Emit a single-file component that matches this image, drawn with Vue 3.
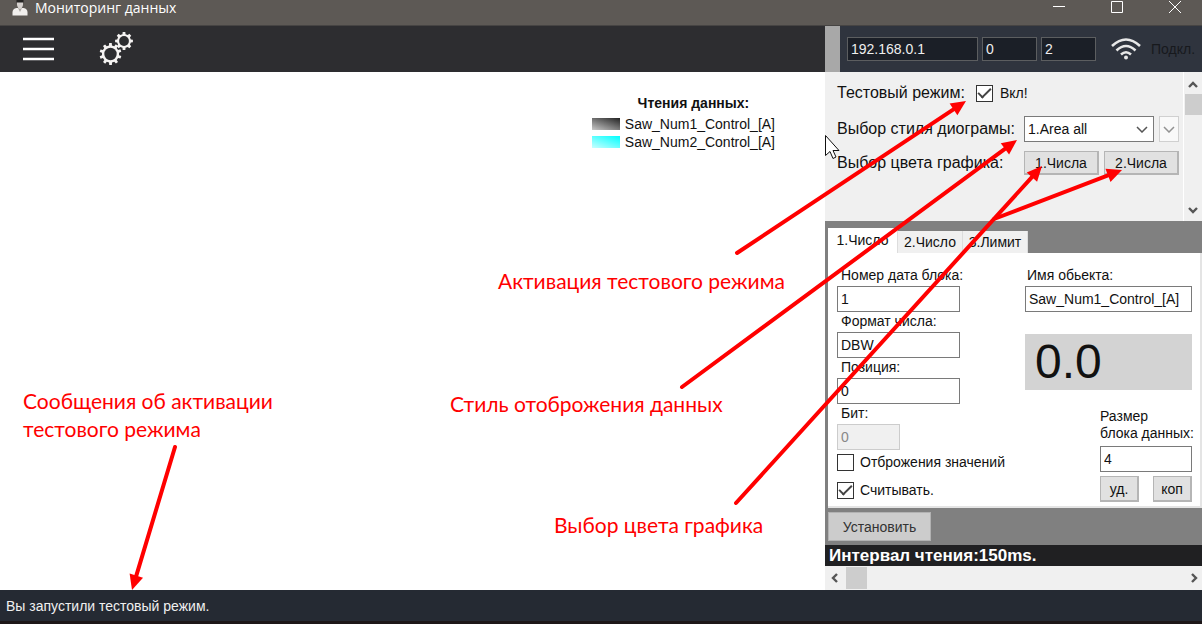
<script setup>
import { ref } from 'vue'

const ip = ref('192.168.0.1')
const rack = ref('0')
const slot = ref('2')
const testMode = ref(true)
const styleName = ref('1.Area all')
const block = ref('1')
const format = ref('DBW')
const position = ref('0')
const bit = ref('0')
const objectName = ref('Saw_Num1_Control_[A]')
const size = ref('4')
const showValues = ref(false)
const readValues = ref(true)
const tabs = ['1.Число', '2.Число', '3.Лимит']
const active = ref(0)

// each arrow runs from its tail to the tip of its head
const arrows = [
  [737, 253, 966, 101],
  [682, 387, 1017, 140],
  [736, 503, 1042, 166],
  [994, 219, 1122, 170],
  [175, 447, 132, 590],
].map(([x1, y1, x2, y2]) => {
  const d = Math.hypot(x2 - x1, y2 - y1)
  const ux = (x2 - x1) / d
  const uy = (y2 - y1) / d
  const bx = x2 - ux * 15
  const by = y2 - uy * 15
  return {
    x1, y1, x2: bx, y2: by,
    head: `${x2},${y2} ${bx - uy * 7},${by + ux * 7} ${bx + uy * 7},${by - ux * 7}`,
  }
})

const gear = (cx, cy, outer, inner, teeth, turn) => {
  const pts = []
  for (let i = 0; i < teeth; i++) {
    for (const [o, r] of [[-0.28, inner], [-0.19, outer], [0.19, outer], [0.28, inner]]) {
      const t = ((i + o) / teeth) * Math.PI * 2 + turn
      pts.push(`${cx + Math.cos(t) * r},${cy + Math.sin(t) * r}`)
    }
  }
  return pts.join(' ')
}
const bigGear = gear(11.5, 22, 11, 8.6, 10, 0.31)
const smallGear = gear(25, 9, 9, 7, 8, 0)
</script>

<template>
  <div class="window">
    <header class="titlebar">
      <svg class="app-icon" viewBox="0 0 18 18" width="18" height="18" aria-hidden="true">
        <path d="M1.500 15.500v-3q0-4 4-4.500h7q4 .5 4 4.500v3z" fill="#f1efed" />
        <path d="M7 8l2 4 2-4z" fill="#a8a4a0" />
        <path d="M6 1q3-2 6 0v4q-1 4-3 4T6 5z" fill="#d6d2cf" />
        <path d="M5.500 0h7v2.500h-7z" fill="#242322" />
      </svg>
      <h1>Мониторинг данных</h1>
      <div class="window-buttons">
        <button aria-label="Свернуть"><svg viewBox="0 0 12 12" width="12" height="12"><path d="M0 5.500h12" /></svg></button>
        <button aria-label="Развернуть"><svg viewBox="0 0 12 12" width="12" height="12"><path d="M.5.5h11v11H.5z" /></svg></button>
        <button aria-label="Закрыть"><svg viewBox="0 0 12 12" width="12" height="12"><path d="M0 0l12 12M12 0L0 12" /></svg></button>
      </div>
    </header>

    <div class="toolbar">
      <div class="tools">
        <button aria-label="Меню">
          <svg viewBox="0 0 31 24" width="31" height="24"><path d="M0 2h31M0 12h31M0 22h31" stroke="#fff" stroke-width="2.400" /></svg>
        </button>
        <button aria-label="Настройки">
          <svg viewBox="0 0 34 34" width="34" height="34">
            <polygon :points="bigGear" fill="#f5f3f2" />
            <polygon :points="smallGear" fill="#f5f3f2" />
            <circle cx="11.500" cy="22" r="6.200" fill="#2d2d30" />
            <circle cx="25" cy="9" r="4.900" fill="#2d2d30" />
          </svg>
        </button>
      </div>
      <div class="connection">
        <input v-model="ip" class="ip" aria-label="IP адрес" />
        <input v-model="rack" aria-label="Стойка" />
        <input v-model="slot" aria-label="Слот" />
        <svg class="wifi" viewBox="0 0 30 22" width="30" height="22" fill="none" stroke="#e8e8e8" stroke-width="2.600" aria-hidden="true">
          <path d="M1 8Q15-5 29 8M5.500 12.500Q15 3.500 24.500 12.500M10 16.500Q15 12 20 16.500" />
          <circle cx="15" cy="19.500" r="2" fill="#e8e8e8" stroke="none" />
        </svg>
        <button class="connect">Подкл.</button>
      </div>
    </div>

    <main>
      <section class="chart">
        <div class="legend">
          <h2>Чтения данных:</h2>
          <ul>
            <li><i class="swatch dark"></i>Saw_Num1_Control_[A]</li>
            <li><i class="swatch cyan"></i>Saw_Num2_Control_[A]</li>
          </ul>
        </div>
      </section>

      <aside>
        <section class="settings">
          <div class="settings-body">
            <div class="setting">
              <label for="test">Тестовый режим:</label>
              <input id="test" v-model="testMode" type="checkbox" />
              <label for="test" class="on">Вкл!</label>
            </div>
            <div class="setting grid">
              <label for="style">Выбор стиля диограмы:</label>
              <div class="row">
                <select id="style" v-model="styleName"><option>1.Area all</option></select>
                <select class="mini" disabled aria-label="Вариант"><option></option></select>
              </div>
            </div>
            <div class="setting grid">
              <span>Выбор цвета графика:</span>
              <div class="row">
                <button class="btn">1.Числа</button>
                <button class="btn">2.Числа</button>
              </div>
            </div>
          </div>
          <div class="vscroll" aria-hidden="true">
            <svg viewBox="0 0 10 7" width="10" height="7"><path d="M1 6l4-4 4 4" /></svg>
            <i></i>
            <svg class="end" viewBox="0 0 10 7" width="10" height="7"><path d="M1 1l4 4 4-4" /></svg>
          </div>
        </section>

        <section class="numbers">
          <div class="tabs" role="tablist">
            <button v-for="(t, i) in tabs" :key="t" role="tab" :aria-selected="active === i" :class="{ active: active === i }" @click="active = i">{{ t }}</button>
          </div>
          <div class="page">
            <div class="left">
              <label for="block">Номер дата блока:</label>
              <input id="block" v-model="block" />
              <label for="format">Формат числа:</label>
              <input id="format" v-model="format" />
              <label for="position">Позиция:</label>
              <input id="position" v-model="position" />
              <label for="bit">Бит:</label>
              <input id="bit" v-model="bit" class="short" disabled />
              <div class="check"><input id="show" v-model="showValues" type="checkbox" /><label for="show">Отброжения значений</label></div>
              <div class="check"><input id="read" v-model="readValues" type="checkbox" /><label for="read">Считывать.</label></div>
            </div>
            <div class="right">
              <label for="name">Имя обьекта:</label>
              <input id="name" v-model="objectName" />
              <output>0.0</output>
              <div class="size">
                <label for="size">Размер<br />блока данных:</label>
                <input id="size" v-model="size" />
                <div class="row">
                  <button class="btn">уд.</button>
                  <button class="btn">коп</button>
                </div>
              </div>
            </div>
          </div>
          <button class="apply">Установить</button>
        </section>

        <p class="interval">Интервал чтения:150ms.</p>
        <div class="hscroll" aria-hidden="true">
          <svg viewBox="0 0 7 10" width="7" height="10"><path d="M6 1L2 5l4 4" /></svg>
          <i></i>
          <svg class="end" viewBox="0 0 7 10" width="7" height="10"><path d="M1 1l4 4-4 4" /></svg>
        </div>
      </aside>
    </main>

    <footer>Вы запустили тестовый режим.</footer>

    <svg class="arrows" viewBox="0 0 1202 624" width="1202" height="624" aria-hidden="true">
      <path class="cursor" d="M825.500 135.500v20l4.500-4 3 7 3-1.500-3-6.500h6z" />
      <g v-for="(a, i) in arrows" :key="i">
        <line :x1="a.x1" :y1="a.y1" :x2="a.x2" :y2="a.y2" />
        <polygon :points="a.head" />
      </g>
    </svg>
    <p class="note note-test">Активация тестового режима</p>
    <p class="note note-style">Стиль отоброжения данных</p>
    <p class="note note-color">Выбор цвета графика</p>
    <p class="note note-status">Сообщения об активации<br />тестового режима</p>
  </div>
</template>

<style>
body { background: #fff; }
</style>

<style scoped>
* { box-sizing: border-box; margin: 0; }
.window {
  position: relative;
  display: flex;
  flex-direction: column;
  min-height: 100vh;
  overflow: hidden;
  font: 14px/16px "Liberation Sans", Arial, sans-serif;
  color: #111;
}
button, input, select { font: inherit; color: inherit; border-radius: 0; }
button { padding: 0; border: 0; background: none; }
input, select { border: 1px solid #7a7a7a; background: #fff; padding: 0 3px; min-width: 0; }

.titlebar { display: flex; height: 26px; background: #5d5955; color: #fff; padding-left: 11px; border-bottom: 1px solid #464443; }
.titlebar h1 { font: 14px/16px "Open Sans", sans-serif; margin-left: 6px; }
.window-buttons { display: flex; align-items: flex-start; gap: 46px; margin: 1px 21px 0 auto; }
.window-buttons button { display: flex; width: 12px; height: 12px; }
.window-buttons svg { stroke: #fff; fill: none; }

.toolbar { display: flex; height: 46px; }
.tools { flex: 1; display: flex; align-items: center; gap: 45px; padding-left: 23px; background: #2d2d30; }
.tools button, .tools svg { display: block; }
.connection { display: flex; align-items: center; width: 377px; padding-left: 7px; border-left: 15px solid #a8a8a8; background: #2f343e; }
.connection input { width: 55px; height: 24px; margin-right: 4px; background: #1b1f27; border: 1px solid #5c5e60; color: #eee; }
.connection .ip { width: 131px; }
.wifi { margin-left: 11px; }
.connect { margin-left: 10px; color: #17191d; }

main { flex: 1; display: flex; }
.chart { flex: 1; display: flex; justify-content: flex-end; align-items: flex-start; padding: 23px 50px 0 0; background: #fff; }
.legend h2 { font-size: 14px; line-height: 16px; text-align: center; margin-left: 20px; }
.legend ul { list-style: none; padding: 0; margin-top: 4px; }
.legend li { display: flex; align-items: center; gap: 5px; line-height: 18px; }
.swatch { width: 28px; height: 12px; }
.dark { background: linear-gradient(20deg, #c8c8c8, #222); }
.cyan { background: linear-gradient(20deg, #c8ffff, #00ffff); }

aside { width: 377px; display: flex; flex-direction: column; background: #808080; }
.settings { display: flex; height: 149px; background: #f0f0f0; }
.settings-body { flex: 1; padding: 9px 0 0 12px; font-size: 16px; }
.setting { display: flex; align-items: center; height: 24px; margin-bottom: 11px; }
.setting.grid { display: grid; grid-template-columns: 187px 1fr; }
.setting .on { font-size: 14px; margin-left: 7px; }
.row { display: flex; gap: 5px; font-size: 14px; }
input[type="checkbox"] { appearance: none; width: 17px; height: 17px; padding: 0; border: 1px solid #333; display: grid; place-items: center; }
input[type="checkbox"]:checked::after { content: ""; width: 11px; height: 5px; border: solid #444; border-width: 0 0 2px 2px; transform: translateY(-2px) rotate(-45deg); }
.setting input { margin-left: 11px; }
select { width: 130px; height: 26px; appearance: none; background: #fff url("data:image/svg+xml,%3Csvg xmlns='http://www.w3.org/2000/svg' width='12' height='7' fill='none' stroke='%23555' stroke-width='1.500'%3E%3Cpath d='M1 1l5 5 5-5'/%3E%3C/svg%3E") no-repeat right 5px center; }
.mini { width: 20px; border-color: #bbb; background-position: center; opacity: .6; }
.btn { height: 24px; flex: 0 0 75px; background: #e1e1e1; border: 2px solid #b5b5b5; border-width: 1px 2px 2px 1px; }
.vscroll { width: 19px; display: flex; flex-direction: column; align-items: center; padding: 9px 0 7px; border-left: 1px solid #fff; }
.vscroll svg, .hscroll svg { fill: none; stroke: #555; stroke-width: 2.400; }
.vscroll i { width: 17px; height: 21px; margin-top: 6px; background: #cdcdcd; }
.end { margin-top: auto; }

.numbers { flex: 1; padding: 7px 0 0 3px; }
.tabs { display: flex; align-items: flex-end; height: 25px; }
.tabs button { width: 65px; height: 22px; background: #f0f0f0; border-right: 1px solid #ddd; }
.tabs .active { width: 70px; height: 25px; padding-bottom: 2px; background: #fff; }
.page { display: flex; justify-content: space-between; height: 255px; padding: 13px 8px 0 9px; background: #fff; border: 1px solid #e4e4e4; border-width: 0 2px 2px 0; }
.left, .right { display: flex; flex-direction: column; }
.left { width: 170px; }
.left > label, .right > label { padding: 1px 0 3px 4px; height: 20px; line-height: 16px; }
.left > input, .right input { height: 26px; flex: none; }
.left > input { width: 123px; }
.left .short { width: 63px; margin-bottom: -2px; }
.left input:disabled { background: #f0f0f0; border-color: #ccc; color: #888; }
.check { display: flex; align-items: center; gap: 6px; height: 28px; }
.right { width: 167px; }
.right > label { padding-left: 2px; }
output { display: block; height: 56px; margin-top: 22px; padding-left: 10px; background: #d3d3d3; font: 48px/56px "Liberation Sans", sans-serif; }
.size { width: 92px; margin: 18px 0 0 auto; white-space: nowrap; }
.size label { display: block; margin-bottom: 4px; line-height: 17px; }
.size input { width: 92px; }
.size .row { justify-content: space-between; margin-top: 4px; }
.size .btn { flex-basis: 39px; height: 26px; }
.apply { width: 103px; height: 29px; margin: 4px 0 0; background: #ccc; border: 1px solid #b2b2b2; color: #333; }
.interval { height: 21px; padding-left: 4px; background: #202022; color: #fff; font-weight: bold; font-size: 17px; line-height: 21px; }
.hscroll { display: flex; align-items: center; height: 24px; padding: 0 4px 0 6px; background: #f0f0f0; }
.hscroll i { width: 21px; height: 22px; margin-left: 8px; background: #cdcdcd; }
.hscroll .end { margin: 0 0 0 auto; }

footer { height: 34px; padding: 0 6px; background: #252a33; border-bottom: 3px solid #1d1718; color: #f0f0f0; line-height: 32px; }

.arrows { position: absolute; top: 0; left: 0; pointer-events: none; }
.arrows line { stroke: #f00; stroke-width: 4; stroke-linecap: round; }
.arrows polygon { fill: #f00; }
.cursor { fill: #fff; stroke: #111; stroke-width: 1; }
.note { position: absolute; font: 21px/28px Lato, sans-serif; color: #f00; white-space: nowrap; }
.note-test { left: 498px; top: 267px; }
.note-style { left: 450px; top: 390px; }
.note-color { left: 554px; top: 511px; }
.note-status { left: 23px; top: 387px; }
</style>
